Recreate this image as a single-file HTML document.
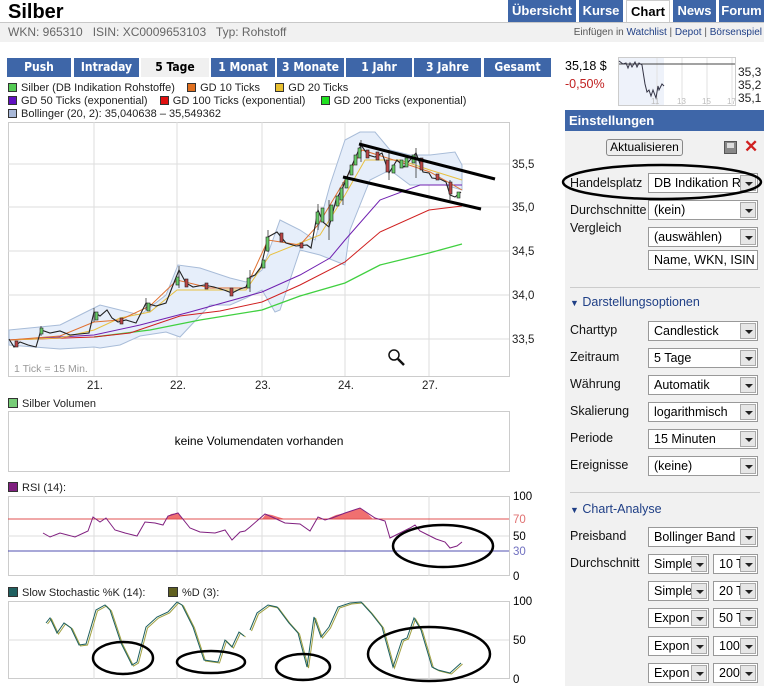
<!DOCTYPE html>
<html><head><meta charset="utf-8"><style>
*{margin:0;padding:0;box-sizing:border-box}
body{width:764px;height:686px;overflow:hidden;background:#fff;font-family:"Liberation Sans",sans-serif;font-size:12px;color:#000;position:relative}
.a{position:absolute;white-space:nowrap}
.tab{position:absolute;top:0;height:22px;background:#3e66a8;color:#fff;font-weight:bold;font-size:13px;text-align:center;line-height:21px}
.pt{position:absolute;top:58px;height:19px;background:#3e66a8;color:#fff;font-weight:bold;font-size:12px;text-align:center;line-height:19px;font-family:"DejaVu Sans Condensed","Liberation Sans",sans-serif}
.lg{position:absolute;font-size:11px;color:#222;white-space:nowrap;font-family:"Liberation Sans",sans-serif}
.lg i{display:inline-block;width:9px;height:9px;border:1px solid #333;margin-right:4px;vertical-align:-1px}
.sel{position:absolute;height:20px;background:#fff;border:1px solid #999;font-size:12.5px;line-height:18px;padding-left:5px;overflow:hidden;white-space:nowrap}
.sel b{position:absolute;right:1px;top:1px;width:16px;height:16px;background:#e6e6e6;border:1px solid #aaa}
.sel b:after{content:"";position:absolute;left:4px;top:6px;border-left:4px solid transparent;border-right:4px solid transparent;border-top:4px solid #222}
.lb{position:absolute;left:570px;font-size:12.5px;color:#111}
.sec{position:absolute;left:570px;color:#1f3f86;font-size:12.5px}
</style></head><body>
<div class="a" style="left:8px;top:0;font-size:20px;font-weight:bold;line-height:24px">Silber</div>
<div class="tab" style="left:508px;width:68px">Übersicht</div>
<div class="tab" style="left:579px;width:44px">Kurse</div>
<div class="tab" style="left:626px;width:44px;background:#fff;color:#000;border:1px solid #ccc;border-bottom:none">Chart</div>
<div class="tab" style="left:673px;width:43px">News</div>
<div class="tab" style="left:719px;width:45px">Forum</div>
<div class="a" style="left:0;top:22px;width:764px;height:20px;background:#f1f1f1;border-top:1px solid #c8c8c8"></div>
<div class="a" style="left:8px;top:25px;font-size:12px;color:#666">WKN: 965310 &nbsp; ISIN: XC0009653103 &nbsp; Typ: Rohstoff</div>
<div class="a" style="right:2px;top:27px;font-size:10px;color:#555">Einfügen in <span style="color:#1f3f86">Watchlist</span> | <span style="color:#1f3f86">Depot</span> | <span style="color:#1f3f86">Börsenspiel</span></div>

<div class="pt" style="left:7px;width:64px">Push</div>
<div class="pt" style="left:74px;width:65px">Intraday</div>
<div class="pt" style="left:141px;width:68px;background:#f0f0f0;color:#000">5 Tage</div>
<div class="pt" style="left:211px;width:64px">1 Monat</div>
<div class="pt" style="left:277px;width:67px">3 Monate</div>
<div class="pt" style="left:346px;width:66px">1 Jahr</div>
<div class="pt" style="left:414px;width:67px">3 Jahre</div>
<div class="pt" style="left:484px;width:67px">Gesamt</div>

<div class="lg" style="left:8px;top:82px"><i style="background:#5c5"></i>Silber (DB Indikation Rohstoffe) &nbsp;&nbsp; <i style="background:#e07020"></i>GD 10 Ticks &nbsp;&nbsp;&nbsp; <i style="background:#e8c030"></i>GD 20 Ticks</div>
<div class="lg" style="left:8px;top:95px"><i style="background:#6010c0"></i>GD 50 Ticks (exponential) &nbsp;&nbsp; <i style="background:#e01010"></i>GD 100 Ticks (exponential) &nbsp;&nbsp;&nbsp; <i style="background:#20e020"></i>GD 200 Ticks (exponential)</div>
<div class="lg" style="left:8px;top:108px"><i style="background:#a8b8d8"></i>Bollinger (20, 2): 35,040638 – 35,549362</div>

<svg class="a" style="left:0;top:0" width="560" height="686" font-family="Liberation Sans,sans-serif" font-size="11">
<rect x="8.5" y="122.5" width="501" height="254" fill="#fff" stroke="#ccc"/>
<g stroke="#ddd"><line x1="94" y1="122" x2="94" y2="376"/><line x1="177" y1="122" x2="177" y2="376"/><line x1="262" y1="122" x2="262" y2="376"/><line x1="345" y1="122" x2="345" y2="376"/><line x1="429" y1="122" x2="429" y2="376"/>
<line x1="8" y1="164" x2="509" y2="164"/><line x1="8" y1="207" x2="509" y2="207"/><line x1="8" y1="251" x2="509" y2="251"/><line x1="8" y1="295" x2="509" y2="295"/><line x1="8" y1="339" x2="509" y2="339"/></g>
<polygon fill="#e6eefa" stroke="#a8bcd8" points="9,330 60,325 94,308 100,305 120,310 140,315 166,295 178,265 200,268 230,278 246,282 262,270 280,220 300,230 315,240 330,185 345,140 360,132 375,132 390,150 410,155 430,155 455,152 462,165 462,190 445,185 430,185 410,185 390,170 370,180 350,230 345,265 320,255 300,250 280,310 275,312 262,290 246,298 230,305 210,305 180,337 166,332 140,336 120,345 100,348 94,347 60,349 9,345"/>
<polyline fill="none" stroke="#40d040" stroke-width="1.3" points="94,337 150,330 200,320 262,310 300,296 345,283 380,265 429,253 462,244"/>
<polyline fill="none" stroke="#d02020" points="9,340 94,337 130,333 180,316 220,311 262,302 300,285 345,262 380,232 429,210 462,206"/>
<polyline fill="none" stroke="#7020b0" points="9,340 94,335 140,325 190,312 262,292 300,275 330,258 345,240 380,200 420,185 462,185"/>
<polyline fill="none" stroke="#e8c040" points="9,340 60,338 94,330 120,318 150,312 177,290 210,290 246,290 270,255 300,243 320,235 345,195 365,160 400,160 430,170 462,180"/>
<polyline fill="none" stroke="#e07030" points="9,340 60,336 94,322 120,320 150,306 177,280 210,288 246,288 268,240 300,245 318,225 345,180 362,150 400,162 430,172 462,190"/>
<polyline fill="none" stroke="#222" stroke-width="1.1" points="9,339 14,347 20,342 28,345 36,347 41,330 50,333 60,331 70,335 89,333 94,312 100,316 107,310 112,318 118,322 126,320 136,323 146,303 156,306 166,303 175,280 179,270 186,283 193,287 204,285 214,287 224,290 232,293 240,289 246,287 250,277 255,275 261,267 268,237 277,232 286,243 296,246 307,245 311,248 318,210 323,222 329,227 336,200 343,187 350,170 361,145 368,155 375,157 382,153 389,173 397,160 404,167 410,160 416,153 423,172 429,173 432,178 440,179 446,182 450,195 455,197 461,192"/>
<g stroke="#333" stroke-width=".8"><line x1="41" y1="326" x2="41" y2="336"/><line x1="94" y1="308" x2="94" y2="322"/><line x1="146" y1="298" x2="146" y2="310"/><line x1="179" y1="266" x2="179" y2="288"/><line x1="250" y1="270" x2="250" y2="292"/><line x1="268" y1="230" x2="268" y2="252"/><line x1="318" y1="204" x2="318" y2="230"/><line x1="329" y1="200" x2="329" y2="240"/><line x1="343" y1="182" x2="343" y2="205"/><line x1="361" y1="140" x2="361" y2="162"/><line x1="389" y1="150" x2="389" y2="180"/><line x1="416" y1="148" x2="416" y2="178"/><line x1="450" y1="180" x2="450" y2="200"/></g>
<g fill="#6c6" stroke="#222" stroke-width=".6"><rect x="40" y="328" width="3" height="6"/><rect x="95" y="312" width="3" height="8"/><rect x="147" y="303" width="3" height="8"/><rect x="176" y="277" width="3" height="8"/><rect x="247" y="278" width="3" height="10"/><rect x="262" y="260" width="3" height="8"/><rect x="266" y="237" width="3" height="14"/><rect x="316" y="212" width="3" height="12"/><rect x="321" y="208" width="3" height="14"/><rect x="330" y="205" width="3" height="16"/><rect x="336" y="196" width="3" height="10"/><rect x="340" y="188" width="3" height="12"/><rect x="345" y="178" width="3" height="10"/><rect x="350" y="165" width="3" height="10"/><rect x="354" y="155" width="3" height="10"/><rect x="358" y="148" width="3" height="10"/><rect x="392" y="165" width="3" height="8"/><rect x="400" y="160" width="3" height="8"/><rect x="405" y="158" width="3" height="9"/><rect x="412" y="155" width="3" height="8"/><rect x="457" y="192" width="3" height="6"/></g>
<g fill="#b44" stroke="#222" stroke-width=".6"><rect x="15" y="341" width="3" height="6"/><rect x="120" y="318" width="3" height="6"/><rect x="185" y="279" width="3" height="8"/><rect x="205" y="283" width="3" height="6"/><rect x="230" y="288" width="3" height="8"/><rect x="280" y="233" width="3" height="9"/><rect x="300" y="243" width="3" height="5"/><rect x="366" y="150" width="3" height="8"/><rect x="376" y="152" width="3" height="8"/><rect x="386" y="160" width="3" height="12"/><rect x="420" y="158" width="3" height="12"/><rect x="436" y="174" width="3" height="6"/><rect x="449" y="182" width="3" height="12"/></g>
<line x1="359" y1="144" x2="495" y2="179" stroke="#000" stroke-width="3"/>
<line x1="343" y1="177" x2="481" y2="209" stroke="#000" stroke-width="3"/>
<circle cx="394" cy="355" r="5" fill="none" stroke="#111" stroke-width="1.5"/><line x1="398" y1="359" x2="404" y2="365" stroke="#111" stroke-width="2.5"/>
<text x="14" y="372" fill="#999" font-size="10.5">1 Tick = 15 Min.</text>
<g font-size="11.5" fill="#222"><text x="512" y="168">35,5</text><text x="512" y="211">35,0</text><text x="512" y="255">34,5</text><text x="512" y="299">34,0</text><text x="512" y="343">33,5</text>
<text x="87" y="389">21.</text><text x="170" y="389">22.</text><text x="255" y="389">23.</text><text x="338" y="389">24.</text><text x="422" y="389">27.</text></g>
<rect x="8.5" y="398.5" width="9" height="9" fill="#7c7" stroke="#333"/><text x="22" y="407" fill="#222">Silber Volumen</text>
<rect x="8.5" y="411.5" width="501" height="60" fill="#fff" stroke="#ccc"/>
<text x="259" y="445" text-anchor="middle" font-size="12">keine Volumendaten vorhanden</text>
<rect x="8.5" y="482.5" width="9" height="9" fill="#802080" stroke="#333"/><text x="22" y="491" fill="#222">RSI (14):</text>
<rect x="8.5" y="496.5" width="501" height="79" fill="#fff" stroke="#ccc"/>
<g stroke="#ddd"><line x1="94" y1="496" x2="94" y2="576"/><line x1="177" y1="496" x2="177" y2="576"/><line x1="262" y1="496" x2="262" y2="576"/><line x1="345" y1="496" x2="345" y2="576"/><line x1="429" y1="496" x2="429" y2="576"/><line x1="8" y1="536" x2="509" y2="536"/></g>
<polygon fill="#f07070" points="165,519 171,514 178,513 183,519"/>
<polygon fill="#f07070" points="262,519 266,514 272,515 278,517 285,519"/>
<polygon fill="#f07070" points="327,519 336,515 345,513 360,508 368,514 373,519"/>
<line x1="8" y1="519" x2="509" y2="519" stroke="#e05050"/>
<line x1="8" y1="551" x2="509" y2="551" stroke="#5050b0"/>
<polyline fill="none" stroke="#802080" points="43,533 50,537 60,533 75,537 88,531 93,517 100,522 106,518 115,530 125,533 137,536 145,522 155,523 163,525 168,516 178,513 190,528 200,532 215,533 225,530 232,540 240,532 245,531 250,527 258,520 265,514 272,517 285,523 300,524 310,531 318,517 325,520 332,518 345,513 360,508 375,518 385,521 390,538 400,533 410,528 415,525 420,531 428,535 436,539 445,542 450,548 457,546 462,542"/>
<ellipse cx="443" cy="546" rx="50" ry="21" fill="none" stroke="#000" stroke-width="2.5"/>
<g font-size="11.5"><text x="513" y="500">100</text><text x="513" y="523" fill="#e07070">70</text><text x="513" y="540">50</text><text x="513" y="555" fill="#7070c0">30</text><text x="513" y="580">0</text></g>
<rect x="8.5" y="587.5" width="9" height="9" fill="#206060" stroke="#333"/><text x="22" y="596" fill="#222">Slow Stochastic %K (14):</text>
<rect x="168.5" y="587.5" width="9" height="9" fill="#606020" stroke="#333"/><text x="182" y="596" fill="#222">%D (3):</text>
<rect x="8.5" y="601.5" width="501" height="77" fill="#fff" stroke="#ccc"/>
<g stroke="#ddd"><line x1="94" y1="601" x2="94" y2="679"/><line x1="177" y1="601" x2="177" y2="679"/><line x1="262" y1="601" x2="262" y2="679"/><line x1="345" y1="601" x2="345" y2="679"/><line x1="429" y1="601" x2="429" y2="679"/><line x1="8" y1="640" x2="509" y2="640"/></g>
<polyline fill="none" stroke="#a0a040" transform="translate(1.5,1)" points="46,623 50,618 57,633 64,623 71,628 79,645 86,644 96,610 105,605 110,610 121,643 132,665 137,662 146,627 157,617 168,612 177,602 182,605 193,627 204,660 218,662 225,640 232,647 239,632 244,636"/>
<polyline fill="none" stroke="#1d5f5f" points="46,623 50,618 57,633 64,623 71,628 79,645 86,644 96,610 105,605 110,610 121,643 132,665 137,662 146,627 157,617 168,612 177,602 182,605 193,627 204,660 218,662 225,640 232,647 239,632 244,636"/>
<polyline fill="none" stroke="#a0a040" transform="translate(1.5,1)" points="250,630 257,613 268,605 277,607 289,623 298,633 307,667 314,617 321,637 329,627 338,607 350,603 361,602 371,613 382,627 393,667 402,640 407,638 414,618 421,630 432,667 438,670 450,673 461,663"/>
<polyline fill="none" stroke="#1d5f5f" points="250,630 257,613 268,605 277,607 289,623 298,633 307,667 314,617 321,637 329,627 338,607 350,603 361,602 371,613 382,627 393,667 402,640 407,638 414,618 421,630 432,667 438,670 450,673 461,663"/>
<g fill="none" stroke="#000" stroke-width="2.5"><ellipse cx="123" cy="658" rx="30" ry="16"/><ellipse cx="211" cy="662" rx="34" ry="11"/><ellipse cx="303" cy="667" rx="27" ry="13"/><ellipse cx="429" cy="654" rx="61" ry="27"/></g>
<g font-size="11.5"><text x="513" y="605">100</text><text x="513" y="644">50</text><text x="513" y="683">0</text></g>
</svg>

<div class="a" style="left:565px;top:59px;font-size:12.5px">35,18 $</div>
<div class="a" style="left:565px;top:77px;font-size:12.5px;color:#c02020">-0,50%</div>
<svg class="a" style="left:617px;top:56px" width="147" height="54" font-family="Liberation Sans,sans-serif">
<rect x="1.5" y="1.5" width="117" height="48" fill="#fff" stroke="#ccc"/>
<rect x="2" y="2" width="45" height="47" fill="#eef2fa"/>
<g stroke="#e2e2e2"><line x1="40" y1="2" x2="40" y2="49"/><line x1="65" y1="2" x2="65" y2="49"/><line x1="90" y1="2" x2="90" y2="49"/><line x1="115" y1="2" x2="115" y2="49"/></g>
<line x1="2" y1="8" x2="118" y2="8" stroke="#444"/>
<polyline fill="none" stroke="#334" points="2,5 6,8 9,7 11,12 13,7 15,11 18,6 20,11 22,7 25,9 28,28 30,36 32,34 34,40 36,34 39,42 41,30 42,34 45,28 47,30"/>
<g font-size="8" fill="#bbb"><text x="34" y="48">11</text><text x="60" y="48">13</text><text x="85" y="48">15</text><text x="110" y="48">17</text></g>
<g font-size="12" fill="#222"><text x="121" y="20">35,3</text><text x="121" y="33">35,2</text><text x="121" y="46">35,1</text></g>
</svg>
<div class="a" style="left:565px;top:110px;width:199px;height:21px;background:#3e66a8;color:#fff;font-weight:bold;font-size:13px;line-height:21px;padding-left:4px">Einstellungen</div>
<div class="a" style="left:565px;top:131px;width:199px;height:555px;background:#f1f1f1"></div>
<div class="a" style="left:606px;top:139px;width:77px;height:17px;border:1px solid #888;border-radius:3px;background:#eee;font-size:12px;text-align:center;line-height:15px">Aktualisieren</div>
<div class="a" style="left:724px;top:141px;width:13px;height:13px;background:#888;border:1px solid #555"><div style="margin:1px 2px;height:5px;background:#ddd"></div></div>
<div class="a" style="left:744px;top:138px;font-size:17px;font-weight:bold;color:#d02020;line-height:18px">✕</div>

<div class="lb" style="top:176px">Handelsplatz</div><div class="sel" style="left:648px;top:173px;width:110px">DB Indikation R<b></b></div>
<div class="lb" style="top:203px">Durchschnitte</div><div class="sel" style="left:648px;top:200px;width:110px">(kein)<b></b></div>
<div class="lb" style="top:221px">Vergleich</div><div class="sel" style="left:648px;top:227px;width:110px">(auswählen)<b></b></div>
<div class="sel" style="left:648px;top:250px;width:110px">Name, WKN, ISIN</div>
<div class="a" style="left:570px;top:287px;width:190px;border-top:1px solid #ccc"></div>
<div class="sec" style="top:295px"><span style="font-size:9px">▼</span> Darstellungsoptionen</div>
<div class="lb" style="top:323px">Charttyp</div><div class="sel" style="left:648px;top:321px;width:110px">Candlestick<b></b></div>
<div class="lb" style="top:350px">Zeitraum</div><div class="sel" style="left:648px;top:348px;width:110px">5 Tage<b></b></div>
<div class="lb" style="top:377px">Währung</div><div class="sel" style="left:648px;top:375px;width:110px">Automatik<b></b></div>
<div class="lb" style="top:404px">Skalierung</div><div class="sel" style="left:648px;top:402px;width:110px">logarithmisch<b></b></div>
<div class="lb" style="top:431px">Periode</div><div class="sel" style="left:648px;top:429px;width:110px">15 Minuten<b></b></div>
<div class="lb" style="top:458px">Ereignisse</div><div class="sel" style="left:648px;top:456px;width:110px">(keine)<b></b></div>
<div class="a" style="left:570px;top:492px;width:190px;border-top:1px solid #ccc"></div>
<div class="sec" style="top:502px"><span style="font-size:9px">▼</span> Chart-Analyse</div>
<div class="lb" style="top:529px">Preisband</div><div class="sel" style="left:648px;top:527px;width:110px">Bollinger Band<b></b></div>
<div class="lb" style="top:556px">Durchschnitt</div>
<div class="sel" style="left:648px;top:554px;width:61px">Simple<b></b></div><div class="sel" style="left:713px;top:554px;width:45px">10 T<b></b></div>
<div class="sel" style="left:648px;top:581px;width:61px">Simple<b></b></div><div class="sel" style="left:713px;top:581px;width:45px">20 T<b></b></div>
<div class="sel" style="left:648px;top:608px;width:61px">Expon<b></b></div><div class="sel" style="left:713px;top:608px;width:45px">50 T<b></b></div>
<div class="sel" style="left:648px;top:636px;width:61px">Expon<b></b></div><div class="sel" style="left:713px;top:636px;width:45px">100<b></b></div>
<div class="sel" style="left:648px;top:663px;width:61px">Expon<b></b></div><div class="sel" style="left:713px;top:663px;width:45px">200<b></b></div>
<svg class="a" style="left:560px;top:160px" width="204" height="45"><ellipse cx="102" cy="22" rx="99" ry="17" fill="none" stroke="#000" stroke-width="2.5"/></svg>
</body></html>
